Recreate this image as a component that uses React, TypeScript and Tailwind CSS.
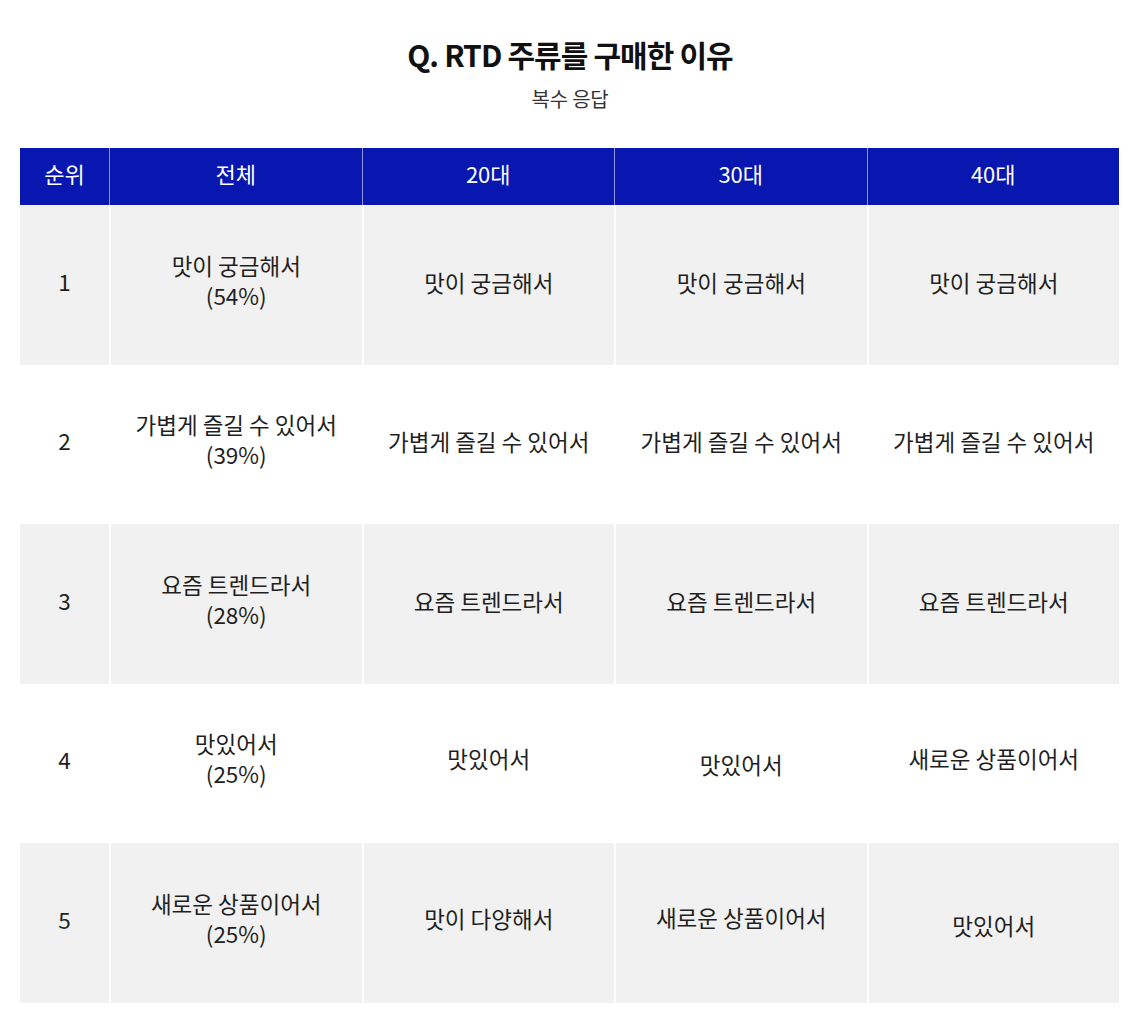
import React from 'react'

type Row = { rank: string; total: string; pct: string; cells: { text: string; shift?: string }[] }

const rows: Row[] = [
    { rank: '1', total: '맛이 궁금해서', pct: '(54%)', cells: [{ text: '맛이 궁금해서' }, { text: '맛이 궁금해서' }, { text: '맛이 궁금해서' }] },
    { rank: '2', total: '가볍게 즐길 수 있어서', pct: '(39%)', cells: [{ text: '가볍게 즐길 수 있어서' }, { text: '가볍게 즐길 수 있어서' }, { text: '가볍게 즐길 수 있어서' }] },
    { rank: '3', total: '요즘 트렌드라서', pct: '(28%)', cells: [{ text: '요즘 트렌드라서' }, { text: '요즘 트렌드라서' }, { text: '요즘 트렌드라서' }] },
    { rank: '4', total: '맛있어서', pct: '(25%)', cells: [{ text: '맛있어서', shift: '-mt-[4px]' }, { text: '맛있어서', shift: 'mt-[8px]' }, { text: '새로운 상품이어서', shift: '-mt-[4px]' }] },
    { rank: '5', total: '새로운 상품이어서', pct: '(25%)', cells: [{ text: '맛이 다양해서', shift: '-mt-[4px]' }, { text: '새로운 상품이어서', shift: '-mt-[6px]' }, { text: '맛있어서', shift: 'mt-[10px]' }] },
]

const heads = ['순위', '전체', '20대', '30대', '40대']

export default function App() {
    return (
        <div className="min-h-[1031px] bg-white text-[#1f1f1f]" style={{ fontFamily: '"Noto Sans CJK KR", "Noto Sans", sans-serif' }}>
            <div className="flex flex-col items-center pt-[32px]">
                <h1 className="text-[30px] font-bold leading-[44px] tracking-[-0.03em] text-[#111]">Q. RTD 주류를 구매한 이유</h1>
                <p className="mt-[8px] text-[20px] leading-[30px] tracking-[-0.01em] text-[#333]">복수 응답</p>
            </div>

            <div className="mx-[20px] mt-[34px] w-[1099px]">
                <div className="grid grid-cols-[89px_1fr_1fr_1fr_1fr] bg-[#0717b0] h-[57px]">
                    {heads.map((h, i) => (
                        <div
                            key={h}
                            className={`flex items-center justify-center text-[22px] text-white ${i > 0 ? 'border-l border-[#8d95e0]' : ''}`}
                        >
                            <span className="-translate-y-[3px]">{h}</span>
                        </div>
                    ))}
                </div>

                {rows.map((r, idx) => (
                    <div
                        key={r.rank}
                        className={`grid grid-cols-[89px_1fr_1fr_1fr_1fr] h-[159.5px] text-[22.5px] leading-[30px] ${idx % 2 === 0 ? 'bg-[#f1f1f1]' : 'bg-white'}`}
                    >
                        <div className="flex items-center justify-center">
                            <span className="-translate-y-[4px]">{r.rank}</span>
                        </div>
                        <div className="flex flex-col items-center justify-center border-l-2 border-white">
                            <span className="-translate-y-[5px]">{r.total}</span>
                            <span className="-translate-y-[5px]">{r.pct}</span>
                        </div>
                        {r.cells.map((c, ci) => (
                            <div key={ci} className="flex items-center justify-center border-l-2 border-white">
                                <span className={`-translate-y-[3px] ${c.shift ?? ''}`}>{c.text}</span>
                            </div>
                        ))}
                    </div>
                ))}
            </div>
        </div>
    )
}
